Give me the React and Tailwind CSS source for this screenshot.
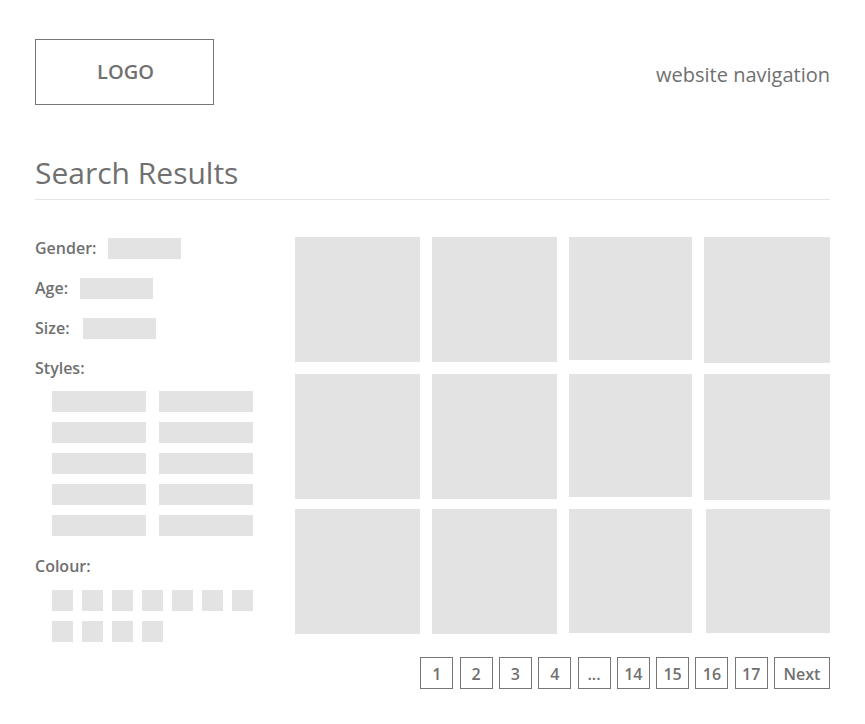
import React from "react";

const rows = [
  { h: "h-[137px]", tiles: ["w-[125px] h-[125px]", "w-[125px] h-[125px]", "w-[123px] h-[123px]", "w-[126px] h-[126px]"] },
  { h: "h-[135px]", tiles: ["w-[125px] h-[125px]", "w-[125px] h-[125px]", "w-[123px] h-[123px]", "w-[126px] h-[126px]"] },
  { h: "h-[125px]", tiles: ["w-[125px] h-[125px]", "w-[125px] h-[125px]", "w-[123px] h-[124px]", "ml-[2px] w-[124px] h-[124px]"] },
];

const pages = ["1", "2", "3", "4", "...", "14", "15", "16", "17"];

export default function App() {
  return (
    <div
      className="w-[865px] min-h-[724px] bg-white px-[35px] pt-[39px] text-[#707070]"
      style={{ fontFamily: '"Open Sans", "Liberation Sans", sans-serif' }}
    >
      <header className="flex justify-between items-start">
        <div className="w-[179px] h-[66px] border border-[#777] flex items-center justify-center pl-[2px] pb-[1px]">
          <span className="text-[20px] font-semibold leading-none">LOGO</span>
        </div>
        <div className="mt-[22px] text-[20px] leading-[28px]">website navigation</div>
      </header>

      <h1 className="mt-[47px] text-[30px] leading-[41px] pb-[6px] border-b border-[#e5e5e5]">
        Search Results
      </h1>

      <main className="mt-[37px] flex">
        <aside className="w-[260px] shrink-0">
          <div className="flex items-center h-[22px]">
            <span className="text-[16px] font-semibold leading-[22px]">Gender:</span>
            <div className="ml-[12px] w-[73px] h-[21px] bg-[#e3e3e3]" />
          </div>
          <div className="flex items-center h-[22px] mt-[18px]">
            <span className="text-[16px] font-semibold leading-[22px]">Age:</span>
            <div className="ml-[12px] w-[73px] h-[21px] bg-[#e3e3e3]" />
          </div>
          <div className="flex items-center h-[22px] mt-[18px]">
            <span className="text-[16px] font-semibold leading-[22px]">Size:</span>
            <div className="ml-[13px] w-[73px] h-[21px] bg-[#e3e3e3]" />
          </div>
          <div className="mt-[18px] text-[16px] font-semibold leading-[22px]">Styles:</div>
          <div className="mt-[12px] ml-[17px] grid grid-cols-[94px_94px] gap-x-[13px] gap-y-[10px]">
            {Array.from({ length: 10 }).map((_, i) => (
              <div key={i} className="h-[21px] bg-[#e3e3e3]" />
            ))}
          </div>
          <div className="mt-[19px] text-[16px] font-semibold leading-[22px]">Colour:</div>
          <div className="mt-[13px] ml-[17px] grid grid-cols-[repeat(7,21px)] gap-x-[9px] gap-y-[10px]">
            {Array.from({ length: 11 }).map((_, i) => (
              <div key={i} className="h-[21px] bg-[#e3e3e3]" />
            ))}
          </div>
        </aside>

        <section className="flex-1">
          {rows.map((r, ri) => (
            <div key={ri} className={`flex items-start gap-[12px] ${r.h}`}>
              {r.tiles.map((t, ti) => (
                <div key={ti} className={`${t} bg-[#e3e3e3] shrink-0`} />
              ))}
            </div>
          ))}
          <nav className="mt-[23px] flex justify-end gap-[6.3px]">
            {pages.map((p) => (
              <div
                key={p}
                className="w-[33px] h-[32px] border border-[#777] flex items-center justify-center pt-[1px] text-[16px] font-semibold leading-none"
              >
                {p}
              </div>
            ))}
            <div className="w-[56px] h-[32px] border border-[#777] flex items-center justify-center pt-[1px] text-[16px] font-semibold leading-none">
              Next
            </div>
          </nav>
        </section>
      </main>
    </div>
  );
}
